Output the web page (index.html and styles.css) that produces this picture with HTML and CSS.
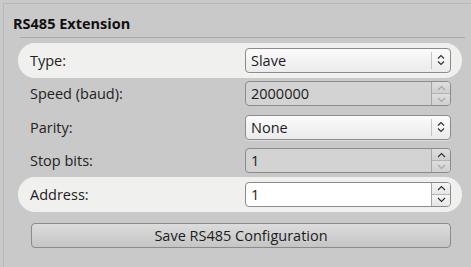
FILE: index.html
```html
<!DOCTYPE html>
<html lang="en">

<head>
    <meta charset="UTF-8">
    <title>RS485 Extension</title>
    <link rel="stylesheet" href="styles.css">
</head>

<body>
    <div class="panel">
        <h3 class="title">RS485 Extension</h3>
        <div class="rule"></div>
        <div class="form">
            <div class="row hl">
                <span class="label">Type:</span>
                <div class="combo">
                    <span class="value">Slave</span>
                    <span class="combo-btn">
                        <svg width="8" height="12" viewBox="0 0 8 12"><path d="M1 4.5 L4 1.5 L7 4.5 M1 7.5 L4 10.5 L7 7.5" fill="none" stroke="#333" stroke-width="1.2"/></svg>
                    </span>
                </div>
            </div>
            <div class="row">
                <span class="label">Speed (baud):</span>
                <div class="spin disabled">
                    <span class="value">2000000</span>
                    <span class="spin-btns">
                        <span class="up off"><svg width="9" height="6" viewBox="0 0 9 6"><path d="M1 5 L4.5 1.5 L8 5" fill="none" stroke="currentColor" stroke-width="1.1"/></svg></span>
                        <span class="down off"><svg width="9" height="6" viewBox="0 0 9 6"><path d="M1 1 L4.5 4.5 L8 1" fill="none" stroke="currentColor" stroke-width="1.1"/></svg></span>
                    </span>
                </div>
            </div>
            <div class="row">
                <span class="label">Parity:</span>
                <div class="combo">
                    <span class="value">None</span>
                    <span class="combo-btn">
                        <svg width="8" height="12" viewBox="0 0 8 12"><path d="M1 4.5 L4 1.5 L7 4.5 M1 7.5 L4 10.5 L7 7.5" fill="none" stroke="#333" stroke-width="1.2"/></svg>
                    </span>
                </div>
            </div>
            <div class="row">
                <span class="label">Stop bits:</span>
                <div class="spin disabled">
                    <span class="value">1</span>
                    <span class="spin-btns">
                        <span class="up"><svg width="9" height="6" viewBox="0 0 9 6"><path d="M1 5 L4.5 1.5 L8 5" fill="none" stroke="currentColor" stroke-width="1.1"/></svg></span>
                        <span class="down off"><svg width="9" height="6" viewBox="0 0 9 6"><path d="M1 1 L4.5 4.5 L8 1" fill="none" stroke="currentColor" stroke-width="1.1"/></svg></span>
                    </span>
                </div>
            </div>
            <div class="row hl">
                <span class="label">Address:</span>
                <div class="spin">
                    <span class="value">1</span>
                    <span class="spin-btns">
                        <span class="up"><svg width="9" height="6" viewBox="0 0 9 6"><path d="M1 5 L4.5 1.5 L8 5" fill="none" stroke="currentColor" stroke-width="1.1"/></svg></span>
                        <span class="down"><svg width="9" height="6" viewBox="0 0 9 6"><path d="M1 1 L4.5 4.5 L8 1" fill="none" stroke="currentColor" stroke-width="1.1"/></svg></span>
                    </span>
                </div>
            </div>
        </div>
        <button class="save">Save RS485 Configuration</button>
    </div>
</body>

</html>
```

FILE: styles.css
```css
* {
    margin: 0;
    padding: 0;
    box-sizing: border-box;
}

body {
    font-family: 'Open Sans', 'DejaVu Sans', sans-serif;
    font-size: 14.5px;
    background: #c9c9c9;
    color: #222;
    width: 471px;
    height: 267px;
    overflow: hidden;
}

.panel {
    margin: 3px 0 0 3px;
    height: 264px;
    border-top: 1px solid #b9b9b9;
    border-left: 1px solid #b9b9b9;
    padding: 10px 6px 0 14px;
}

.title {
    font-size: 14.5px;
    font-weight: 700;
    color: #111;
    margin-left: -5px;
    height: 19px;
    line-height: 19px;
}

.rule {
    height: 1px;
    background: #a9a9a9;
    margin: 4px 0 6px 2px;
}

.form {
    display: flex;
    flex-direction: column;
    gap: 1px;
    margin-right: 3px;
}

.row {
    display: flex;
    align-items: center;
    justify-content: space-between;
    height: 32.5px;
    padding: 0 11px 0 12px;
}

.row.hl {
    background: #f0f0ef;
    border-radius: 17px;
    height: 34.5px;
    margin: -1px 0;
}

.combo,
.spin {
    width: 206px;
    height: 25px;
    border: 1px solid #8b8b8b;
    border-radius: 4px;
    display: flex;
    align-items: stretch;
}

.combo {
    background: linear-gradient(to bottom, #fbfbfb, #ebebeb);
    box-shadow: 0 1px 0 rgba(255, 255, 255, 0.4);
}

.value {
    flex: 1;
    padding-left: 5px;
    display: flex;
    align-items: center;
    color: #1c1c1c;
}

.combo-btn {
    width: 19px;
    border-left: 1px solid #c4c4c4;
    margin: 3px 0;
    display: flex;
    align-items: center;
    justify-content: center;
}

.spin {
    background: #fff;
}

.spin.disabled {
    background: #d3d3d3;
}

.spin-btns {
    width: 19px;
    display: flex;
    flex-direction: column;
    border-left: 1px solid #a6a6a6;
}

.spin-btns span {
    flex: 1;
    display: flex;
    align-items: center;
    justify-content: center;
    color: #2e2e2e;
    background: linear-gradient(to bottom, #f6f6f6, #e6e6e6);
}

.spin.disabled .spin-btns span {
    background: linear-gradient(to bottom, #dedede, #d0d0d0);
}

.spin-btns .up {
    border-bottom: 1px solid #b4b4b4;
    border-top-right-radius: 3px;
}

.spin-btns .down {
    border-bottom-right-radius: 3px;
}

.spin-btns .off {
    color: #a8a8a8;
}

.save {
    display: block;
    margin: 12px 0 0 13px;
    width: 420px;
    height: 25px;
    font-family: inherit;
    font-size: 14.5px;
    color: #1c1c1c;
    border: 1px solid #8b8b8b;
    border-radius: 4px;
    background: linear-gradient(to bottom, #dcdcdc, #c5c5c5);
}
```
